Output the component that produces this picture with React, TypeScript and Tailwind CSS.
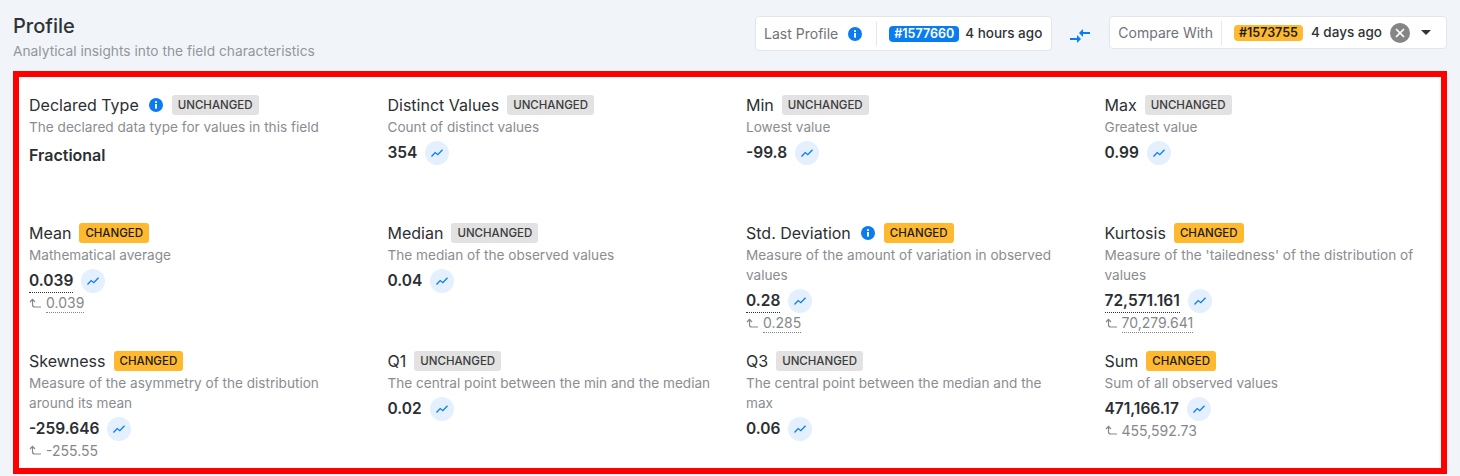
import React from 'react';
import { X } from 'lucide-react';

type Metric = {
  title: string;
  info?: boolean;
  changed?: boolean;
  desc: string;
  value: string;
  prev?: string;
  dotted?: boolean;
  plain?: boolean;
};

const metrics: Metric[] = [
  { title: 'Declared Type', info: true, desc: 'The declared data type for values in this field', value: 'Fractional', plain: true },
  { title: 'Distinct Values', desc: 'Count of distinct values', value: '354' },
  { title: 'Min', desc: 'Lowest value', value: '-99.8' },
  { title: 'Max', desc: 'Greatest value', value: '0.99' },
  { title: 'Mean', changed: true, desc: 'Mathematical average', value: '0.039', prev: '0.039', dotted: true },
  { title: 'Median', desc: 'The median of the observed values', value: '0.04' },
  { title: 'Std. Deviation', info: true, changed: true, desc: 'Measure of the amount of variation in observed values', value: '0.28', prev: '0.285', dotted: true },
  { title: 'Kurtosis', changed: true, desc: "Measure of the 'tailedness' of the distribution of values", value: '72,571.161', prev: '70,279.641', dotted: true },
  { title: 'Skewness', changed: true, desc: 'Measure of the asymmetry of the distribution around its mean', value: '-259.646', prev: '-255.55' },
  { title: 'Q1', desc: 'The central point between the min and the median', value: '0.02' },
  { title: 'Q3', desc: 'The central point between the median and the max', value: '0.06' },
  { title: 'Sum', changed: true, desc: 'Sum of all observed values', value: '471,166.17', prev: '455,592.73' },
];

const InfoDot = () => (
  <svg width={16} height={16} viewBox="0 0 16 16" className="shrink-0">
    <circle cx="8" cy="8" r="7" fill="#0a7cf2" />
    <rect x="7" y="7" width="2" height="4.6" fill="#fff" />
    <rect x="7" y="4.2" width="2" height="1.8" fill="#fff" />
  </svg>
);

const ChartIcon = () => (
  <svg width="14" height="14" viewBox="0 0 14 14" fill="none" stroke="#0a7cf2" strokeWidth="1.3">
    <path d="M1.5 10.5L5.2 6.6l2.6 2.1 4.7-5" />
  </svg>
);

const PrevIcon = () => (
  <svg width="14" height="14" viewBox="0 0 14 14" fill="none" stroke="#85888b" strokeWidth="1.2">
    <path d="M1 5l2.5-2.7L6 5" />
    <path d="M3.5 2.5v5.2c0 1.5.8 2.3 2.3 2.3H12" />
  </svg>
);

const MetricCell = ({ m }: { m: Metric }) => (
  <div className="h-[128px]">
    <div className="flex items-center h-5">
      <span className="text-[16px] text-[#2b2f33] leading-5">{m.title}</span>
      {m.info && <span className="ml-[9px]"><InfoDot /></span>}
      <span
        className={`ml-[8px] h-5 px-[6px] rounded-[3px] text-[11.5px] font-medium leading-5 ${
          m.changed ? 'bg-[#ffb92e] text-[#1c1c1c]' : 'bg-[#e2e2e2] text-[#3c3c3c]'
        }`}
      >
        {m.changed ? 'CHANGED' : 'UNCHANGED'}
      </span>
    </div>
    <p className="mt-[2px] max-w-[324px] text-[13.6px] leading-5 text-[#8a8d90]">{m.desc}</p>
    {m.plain ? (
      <div className="mt-[6px] text-[16px] font-semibold text-[#2b2f33] leading-6">{m.value}</div>
    ) : (
      <div className="mt-[4px] flex items-center gap-2 h-6">
        <span className={`text-[15.5px] font-semibold text-[#2b2f33] leading-[22px] ${m.dotted ? 'border-b border-dotted border-[#333]' : ''}`}>{m.value}</span>
        <span className="flex items-center justify-center w-6 h-6 rounded-full bg-[#e4f0fd]">
          <ChartIcon />
        </span>
      </div>
    )}
    {m.prev && (
      <div className="mt-[1px] flex items-center gap-[3px] text-[14px] leading-[18px] text-[#85888b]">
        <PrevIcon />
        <span className={m.dotted ? 'border-b border-dotted border-[#888]' : ''}>{m.prev}</span>
      </div>
    )}
  </div>
);

const App: React.FC = () => {
  return (
    <div className="w-[1460px] h-[476px] overflow-hidden bg-[#f1f5f9] font-['Inter',sans-serif] px-[13px] pt-[14px]">
      <div className="flex items-start justify-between h-[57px]">
        <div>
          <h1 className="text-[20px] leading-6 font-medium text-[#2f3336]">Profile</h1>
          <p className="mt-[3px] text-[13.75px] leading-5 text-[#93979b]">Analytical insights into the field characteristics</p>
        </div>
        <div className="flex items-start mt-[2px]">
          <div className="flex items-center h-[35px] pl-2 pr-[9px] bg-white border border-[#e2e6ea] rounded">
            <span className="text-[14px] text-[#6f7377]">Last Profile</span>
            <span className="ml-[9px]"><InfoDot /></span>
            <span className="ml-[13px] h-6 w-px bg-[#e4e6e8]" />
            <span className="ml-[12px] px-[5px] h-4 rounded bg-[#0a7cf2] text-white text-[12.5px] font-semibold leading-4">#1577660</span>
            <span className="ml-[6px] text-[13.5px] font-medium text-[#2f3336]">4 hours ago</span>
          </div>
          <svg width="24" height="24" viewBox="0 0 24 24" fill="#0a7cf2" className="ml-[16px] mr-[17px] mt-[8px] shrink-0">
            <path d="M9.01 14H2v2h7.01v3L13 15l-3.99-4v3zm5.98-1v-3H22V8h-7.01V5L11 9l3.99 4z" />
          </svg>
          <div className="flex items-center h-[33px] pl-2 pr-2 bg-white border border-[#e2e6ea] rounded">
            <span className="text-[14px] text-[#6f7377]">Compare With</span>
            <span className="ml-2 h-6 w-px bg-[#e4e6e8]" />
            <span className="ml-[12px] px-[5px] h-4 rounded bg-[#ffb92e] text-[#1c1c1c] text-[12.5px] font-semibold leading-4">#1573755</span>
            <span className="ml-[8px] text-[13.5px] font-medium text-[#2f3336]">4 days ago</span>
            <span className="ml-2 w-5 h-5 rounded-full bg-[#858585] flex items-center justify-center">
              <X size={14} strokeWidth={3} className="text-white" />
            </span>
            <span className="ml-[11px] mr-[7px] w-0 h-0 border-x-[5px] border-x-transparent border-t-[5px] border-t-[#333]" />
          </div>
        </div>
      </div>
      <div className="border-[6px] border-[#ff0000] bg-white h-[403px] pl-[10px] pt-[18px] grid grid-cols-[358.5px_358.5px_358.5px_1fr] content-start">
        {metrics.map(m => (
          <MetricCell key={m.title} m={m} />
        ))}
      </div>
    </div>
  );
};

export default App;
